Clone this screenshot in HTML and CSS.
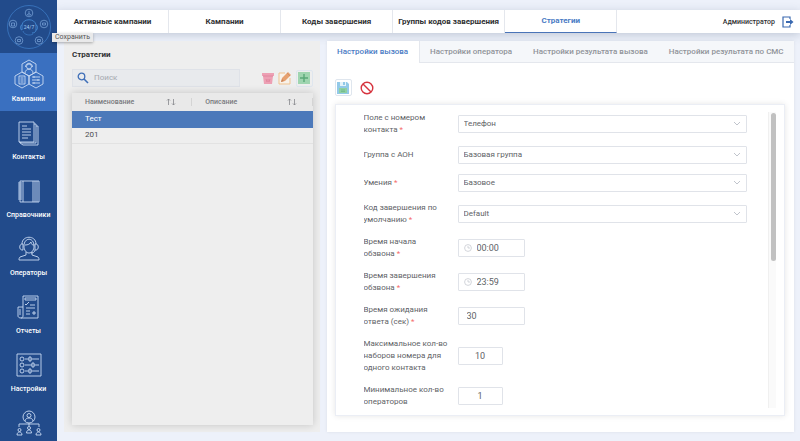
FILE: index.html
```html
<!DOCTYPE html>
<html lang="ru">
<head>
<title>Стратегии</title>
<meta charset="UTF-8">
<meta name="viewport" content="width=device-width, initial-scale=1.0">
<link rel="stylesheet" href="styles.css">
</head>
<body>
  <aside class="sidebar">
    <a class="logo" href="#" aria-label="24/7">
      <svg viewBox="0 0 48 48" width="48" height="48">
        <g fill="none" stroke="#7fa9dc" stroke-width="0.7">
          <circle cx="24" cy="24" r="21.500" stroke="#3f80cc"/>
          <circle cx="24" cy="10" r="3.800"/>
          <circle cx="8" cy="21" r="3.800"/>
          <circle cx="39" cy="21" r="3.800"/>
          <circle cx="14" cy="37.500" r="3.800"/>
          <circle cx="34" cy="37.500" r="3.800"/>
          <path d="M17 22c1-7 13-7 14 0M17 22c-2 0-2 5 0 5zM31 22c2 0 2 5 0 5zM31 27c0 2-2 3-4 3" stroke="#4f9be6"/>
          <path d="M18 28c1 4 7 5 10 3" stroke="#3f80cc"/>
          <path d="M24 8v2M22.500 12c0-2 3-2 3 0zM6.500 20h3v3h-3zM37.500 20h3v2h-3zM12.500 36.500h3v2h-3zM32.500 36.500h3v2h-3z"/>
        </g>
        <text x="24" y="26" text-anchor="middle" class="logo-text">24/7</text>
      </svg>
    </a>
    <nav class="menu">
      <a class="menu-item active" href="#">
        <svg viewBox="0 0 30 30" width="30" height="30">
          <path d="M15 1l7 4v8l-7 4-7-4V5zM8 13l7 4v8l-7 4-7-4v-8zM22 13l7 4v8l-7 4-7-4v-8z"/>
          <circle cx="15" cy="7.500" r="2.500"/>
          <path d="M11 14c0-5 8-5 8 0M11.500 8c0-5 7-5 7 0M5 17h6v8H5zM6.500 19h3M6.500 21h3M6.500 23h3M18 18h8M18 21h8M18 24h8M20 17v2M24 20v2M20 23v2"/>
        </svg>
        <span>Кампании</span>
      </a>
      <a class="menu-item" href="#">
        <svg viewBox="0 0 24 26" width="24" height="26">
          <path d="M2 2h15v20H2zM17 4h2v19H5l-3-1M19 6h2v19H6l-3-2M5 6h5M5 9h9M5 12h9M5 15h9M5 18h6"/>
        </svg>
        <span>Контакты</span>
      </a>
      <a class="menu-item" href="#">
        <svg viewBox="0 0 24 26" width="24" height="26">
          <path d="M3 3h19v21H3zM6 3v21M16 3v21M18 3v21M20 3v21M1 5h4M1 7h4M1 9h4M1 11h4M1 13h4M1 15h4M1 17h4M1 19h4M1 21h4"/>
        </svg>
        <span>Справочники</span>
      </a>
      <a class="menu-item" href="#">
        <svg viewBox="0 0 24 26" width="24" height="26">
          <path d="M7 10c0-9 10-9 10 0 0 4-2 7-5 7s-5-3-5-7zM8 9c3 0 5-1 6-3 0 2 1 3 3 3M5 8c0-9 14-9 14 0M5 8c-3 0-3 6 0 6h1V8zM19 8c3 0 3 6 0 6h-1V8zM18 14c0 2-2 3-4 3M9 16v3l-6 2c-1 1-1 2-1 3h20c0-1 0-2-1-3l-6-2v-3"/>
        </svg>
        <span>Операторы</span>
      </a>
      <a class="menu-item" href="#">
        <svg viewBox="0 0 24 26" width="24" height="26">
          <path d="M6 2h15v22H4c-2 0-3-1-3-2v-9h5zM6 13v9c0 1-1 2-2 2M8 4h11v2H8zM8 10l1 1 3-3M13 11h5M9 14h9M9 17h4M9 20h4M3 15v6M16 18h2v2h-2z"/>
        </svg>
        <span>Отчеты</span>
      </a>
      <a class="menu-item" href="#">
        <svg viewBox="0 0 26 26" width="26" height="26">
          <path d="M1 2h24v22H1zM9 7h4M15 7h8M9 13h7M18 13h5M9 19h4M15 19h8M13 5h2v4h-2zM16 11h2v4h-2zM13 17h2v4h-2z"/>
          <circle cx="6" cy="7" r="2"/>
          <circle cx="6" cy="13" r="2"/>
          <circle cx="6" cy="19" r="2"/>
        </svg>
        <span>Настройки</span>
      </a>
      <a class="menu-item" href="#" aria-label="Группы">
        <svg viewBox="0 0 26 26" width="26" height="26">
          <circle cx="13" cy="7" r="6"/>
          <circle cx="13" cy="5.500" r="2"/>
          <circle cx="3.500" cy="20" r="1.500"/>
          <circle cx="13" cy="18" r="1.500"/>
          <circle cx="22.500" cy="20" r="1.500"/>
          <path d="M9 11c0-4 8-4 8 0M3 17v-3h20v3M13 13v3M1 25c0-4 5-4 5 0zM10.500 23c0-4 5-4 5 0zM20 25c0-4 5-4 5 0z"/>
        </svg>
      </a>
    </nav>
    <div class="tooltip">Сохранить</div>
  </aside>

  <div class="page">
    <header class="header">
      <nav class="top-nav">
        <a href="#">Активные кампании</a>
        <a href="#">Кампании</a>
        <a href="#">Коды завершения</a>
        <a href="#">Группы кодов завершения</a>
        <a class="active" href="#">Стратегии</a>
      </nav>
      <div class="user">
        <span>Администратор</span>
        <button class="icon-btn" type="button" aria-label="Выход">
          <svg viewBox="0 0 12 12" width="12" height="12">
            <path d="M8 3V1H1v10h7V9" fill="none" stroke="#3a69b0" stroke-width="1.200"/>
            <path d="M4 5h4V3l3.500 3L8 9V7H4z" fill="#3a69b0"/>
          </svg>
        </button>
      </div>
    </header>

    <main class="content">
      <section class="list-panel">
        <h1>Стратегии</h1>
        <div class="toolbar">
          <label class="search">
            <svg viewBox="0 0 12 12" width="12" height="12">
              <circle cx="4.500" cy="4.500" r="3.300" fill="none" stroke="#3f6fb8" stroke-width="1.300"/>
              <path d="M7 7l4 4" stroke="#3f6fb8" stroke-width="1.600"/>
            </svg>
            <input type="text" placeholder="Поиск" aria-label="Поиск">
          </label>
          <div class="actions">
            <button class="icon-btn" type="button" aria-label="Удалить">
              <svg viewBox="0 0 12 14" width="12" height="14">
                <path d="M0 2h12v3H0zM1 5h10l-1 8H2z" fill="#eda0b4"/>
                <path d="M1 5h10M4 8l1 3M6 8v3M8 8l-1 3" fill="none" stroke="#dd8299" stroke-width="0.800"/>
              </svg>
            </button>
            <button class="icon-btn" type="button" aria-label="Изменить">
              <svg viewBox="0 0 14 14" width="14" height="14">
                <path d="M7 2H1v11h11V7" fill="#f8f2ea" stroke="#efc391"/>
                <path d="M3 11l1-4 6-6 3 3-6 6z" fill="#e6a170"/>
                <path d="M9 2l3 3" stroke="#c9855a" stroke-width="0.600"/>
                <path d="M3 11l1-3 2 2z" fill="#c9855a"/>
              </svg>
            </button>
            <button class="icon-btn framed" type="button" aria-label="Добавить">
              <svg viewBox="0 0 12 12" width="12" height="12">
                <path d="M0 0h12v12H0z" fill="#9fd5b0"/>
                <path d="M6 2v8M2 6h8" stroke="#59a878" stroke-width="1.400"/>
              </svg>
            </button>
          </div>
        </div>
        <div class="table-box">
          <table>
            <thead>
              <tr>
                <th><div class="th"><span>Наименование</span><svg viewBox="0 0 10 8" width="10" height="8"><path d="M2.500 7V1M1 2.500L2.500 1 4 2.500M7.500 1v6M6 5.500L7.500 7 9 5.500"/></svg></div></th>
                <th><div class="th"><span>Описание</span><svg viewBox="0 0 10 8" width="10" height="8"><path d="M2.500 7V1M1 2.500L2.500 1 4 2.500M7.500 1v6M6 5.500L7.500 7 9 5.500"/></svg></div></th>
              </tr>
            </thead>
            <tbody>
              <tr class="selected"><td>Тест</td><td></td></tr>
              <tr><td>201</td><td></td></tr>
            </tbody>
          </table>
        </div>
      </section>

      <section class="settings-panel">
        <div class="tabs">
          <button class="tab active" type="button">Настройки вызова</button>
          <button class="tab" type="button">Настройки оператора</button>
          <button class="tab" type="button">Настройки результата вызова</button>
          <button class="tab" type="button">Настройки результата по СМС</button>
        </div>
        <div class="form-actions">
          <button class="icon-btn framed" type="button" aria-label="Сохранить">
            <svg viewBox="0 0 14 14" width="14" height="14">
              <path d="M1 1h10l2 2v10H1z" fill="#92c9e8"/>
              <path d="M4 1h6v4H4z" fill="#e4f3fa"/>
              <path d="M7 1h2v3H7z" fill="#92c9e8"/>
              <path d="M3 7h8v5H3z" fill="#8fd0a2"/>
              <path d="M5 9h4M5 10.500h4" stroke="#69b487" stroke-width="0.700"/>
            </svg>
          </button>
          <button class="icon-btn" type="button" aria-label="Отмена">
            <svg viewBox="0 0 14 14" width="14" height="14">
              <circle cx="7" cy="7" r="5.800" fill="none" stroke="#d6343f" stroke-width="1.400"/>
              <path d="M3 3l8 8" stroke="#d6343f" stroke-width="1.400"/>
            </svg>
          </button>
        </div>
        <div class="card">
          <form class="form">
            <div class="form-group">
              <label class="required" for="phone_field">Поле с номером контакта</label>
              <div class="select">
                <select id="phone_field"><option>Телефон</option></select>
                <svg viewBox="0 0 8 6" width="8" height="6"><path d="M1 1l3 3 3-3"/></svg>
              </div>
            </div>
            <div class="form-group">
              <label for="aon_group">Группа с АОН</label>
              <div class="select">
                <select id="aon_group"><option>Базовая группа</option></select>
                <svg viewBox="0 0 8 6" width="8" height="6"><path d="M1 1l3 3 3-3"/></svg>
              </div>
            </div>
            <div class="form-group">
              <label class="required" for="skills">Умения</label>
              <div class="select">
                <select id="skills"><option>Базовое</option></select>
                <svg viewBox="0 0 8 6" width="8" height="6"><path d="M1 1l3 3 3-3"/></svg>
              </div>
            </div>
            <div class="form-group">
              <label class="required" for="end_code">Код завершения по умолчанию</label>
              <div class="select">
                <select id="end_code"><option>Default</option></select>
                <svg viewBox="0 0 8 6" width="8" height="6"><path d="M1 1l3 3 3-3"/></svg>
              </div>
            </div>
            <div class="form-group">
              <label class="required" for="time_start">Время начала обзвона</label>
              <div class="time">
                <svg viewBox="0 0 8 8" width="8" height="8"><circle cx="4" cy="4" r="3.400"/><path d="M4 2v2h2"/></svg>
                <input type="text" id="time_start" value="00:00">
              </div>
            </div>
            <div class="form-group">
              <label class="required" for="time_end">Время завершения обзвона</label>
              <div class="time">
                <svg viewBox="0 0 8 8" width="8" height="8"><circle cx="4" cy="4" r="3.400"/><path d="M4 2v2h2"/></svg>
                <input type="text" id="time_end" value="23:59">
              </div>
            </div>
            <div class="form-group">
              <label class="required" for="wait_time">Время ожидания ответа (сек)</label>
              <input class="field" type="text" id="wait_time" value="30">
            </div>
            <div class="form-group">
              <label for="max_calls">Максимальное кол-во наборов номера для одного контакта</label>
              <input class="field short" type="text" id="max_calls" value="10">
            </div>
            <div class="form-group">
              <label for="min_operators">Минимальное кол-во операторов</label>
              <input class="field short" type="text" id="min_operators" value="1">
            </div>
          </form>
          <div class="scroll-track"><div class="scroll-thumb"></div></div>
        </div>
      </section>
    </main>
  </div>
</body>
</html>
```
FILE: styles.css
```css
* {
  box-sizing: border-box;
}

body {
  margin: 0;
  height: 100vh;
  display: flex;
  overflow: hidden;
  background-color: #edf1fa;
  font-family: Roboto, "Liberation Sans", sans-serif;
  font-size: 8px;
  line-height: 12px;
  color: #606266;
}

a {
  color: inherit;
  text-decoration: none;
}

button, input, select {
  font: inherit;
  color: inherit;
  margin: 0;
}

svg {
  display: block;
  flex: none;
}

/* Sidebar */
.sidebar {
  position: relative;
  flex: none;
  width: 57px;
  background-color: #224b8b;
}

.logo {
  display: flex;
  justify-content: center;
  align-items: center;
  height: 53px;
}

.logo-text {
  font-size: 5px;
  fill: #a9cdf5;
}

.menu {
  height: calc(100vh - 53px);
  overflow: hidden;
}

.menu-item {
  display: flex;
  flex-direction: column;
  align-items: center;
  justify-content: space-between;
  height: 58px;
  padding: 9px 0 6px;
  color: #fff;
  font-size: 7px;
  font-weight: 500;
}

.menu-item svg {
  fill: none;
  stroke: #c9daf3;
  stroke-width: 0.9;
}

.menu-item.active {
  padding-top: 6px;
  background-color: #3a70c0;
}

.tooltip {
  position: absolute;
  left: 52px;
  top: 33px;
  z-index: 2;
  padding: 0 3px;
  background-color: #e9e9ea;
  box-shadow: 0 1px 3px rgba(0, 0, 0, 0.3);
  color: #555;
  font-size: 7px;
  line-height: 9px;
}

/* Header */
.page {
  flex: 1;
  min-width: 0;
  display: flex;
  flex-direction: column;
  padding-top: 10px;
}

.header {
  display: flex;
  justify-content: space-between;
  height: 23px;
  background-color: #fff;
  box-shadow: 0 2px 10px rgba(60, 80, 110, 0.25);
  color: #303133;
  font-weight: 500;
}

.top-nav {
  width: 75.4%;
  display: flex;
}

.top-nav a {
  flex: 1;
  display: flex;
  align-items: center;
  justify-content: center;
  border-right: 1px solid #e4e7ed;
  font-weight: 700;
  white-space: nowrap;
}

.top-nav a.active {
  color: #4a7bc4;
  border-bottom: 1px solid #4a74b8;
}

.user {
  display: flex;
  align-items: center;
  gap: 7px;
  padding-right: 6px;
  font-size: 7px;
}

.icon-btn {
  display: flex;
  align-items: center;
  justify-content: center;
  padding: 0;
  border: none;
  background: none;
  cursor: pointer;
}

.icon-btn.framed {
  width: 17px;
  height: 17px;
  border: 1px solid #dfe6ee;
  border-radius: 2px;
}

/* Content */
.content {
  flex: 1;
  min-height: 0;
  display: flex;
  gap: 7px;
  padding: 8px 6px 9px 7px;
}

.list-panel {
  flex: none;
  width: 35%;
  display: flex;
  flex-direction: column;
  padding: 8px 7px 7px 8px;
  background-color: #eee;
}

.list-panel h1 {
  margin: 0 0 8px;
  font-size: 8px;
  line-height: 12px;
  color: #303133;
}

.toolbar {
  display: flex;
  align-items: center;
  justify-content: space-between;
  margin-bottom: 6px;
}

.search {
  flex: none;
  display: flex;
  align-items: center;
  gap: 5px;
  width: 70%;
  height: 18px;
  padding: 0 4px;
  border: 1px solid #dfe2e8;
  background-color: #e8eaed;
}

.search input {
  flex: 1;
  min-width: 0;
  padding: 0;
  border: none;
  outline: none;
  background: none;
}

.search input::placeholder {
  color: #a6a9b0;
}

.actions {
  display: flex;
  align-items: center;
  gap: 4px;
}

.table-box {
  flex: 1;
  background-color: #eee;
  box-shadow: 0 0 8px rgba(0, 0, 0, 0.18);
}

table {
  width: 100%;
  border-collapse: collapse;
  table-layout: fixed;
}

th, td {
  padding: 0 0 0 13px;
  text-align: left;
}

th {
  height: 18px;
  background-color: #e9e9e9;
  color: #77797d;
  font-size: 7px;
  font-weight: 500;
}

.th {
  display: flex;
  justify-content: space-between;
  align-items: center;
  padding-right: 15px;
  border-right: 1px solid #d4d4d4;
  line-height: 8px;
}

.th svg {
  fill: none;
  stroke: #85878b;
  stroke-width: 0.8;
}

td {
  height: 16px;
  border-bottom: 1px solid #e2e2e2;
  color: #4a4c50;
}

.selected td {
  background-color: #4c79ba;
  border-color: #4c79ba;
  color: #fff;
}

/* Settings */
.settings-panel {
  flex: 1;
  min-width: 0;
  display: flex;
  flex-direction: column;
  background-color: #fff;
  box-shadow: 0 0 3px rgba(0, 0, 0, 0.08);
}

.tabs {
  display: flex;
  height: 22px;
  background-color: #f5f7fa;
}

.tab {
  flex: auto;
  padding: 0 10px;
  border: none;
  border-bottom: 1px solid #e4e7ed;
  background: none;
  color: #909399;
  font-weight: 500;
  white-space: nowrap;
  cursor: pointer;
}

.tab.active {
  border-right: 1px solid #e4e7ed;
  border-bottom: none;
  background-color: #fff;
  color: #4a7bc4;
}

.form-actions {
  display: flex;
  gap: 8px;
  align-items: center;
  padding: 16px 8px 8px;
}

.card {
  flex: 1;
  min-height: 0;
  display: flex;
  margin: 0 9px 16px 8px;
  padding: 7px 8px 7px 28px;
  border: 1px solid #ebeef5;
  box-shadow: 0 0 6px rgba(0, 0, 0, 0.1);
}

.form {
  flex: 1;
  display: flex;
  flex-direction: column;
  gap: 10px;
  padding-right: 21px;
  overflow: hidden;
}

.form-group {
  flex: none;
  display: flex;
  align-items: center;
}

.form-group label {
  flex: none;
  width: 94px;
  padding-right: 8px;
}

.form-group .required::after {
  content: "\a0*";
  color: #f56c6c;
}

.select {
  position: relative;
  flex: 1;
}

.select select {
  display: block;
  width: 100%;
  height: 18px;
  padding: 0 5px;
  appearance: none;
  border: 1px solid #e0e3e9;
  border-radius: 1px;
  background-color: #fff;
}

.select svg {
  position: absolute;
  right: 6px;
  top: 6px;
  fill: none;
  stroke: #c0c4cc;
  pointer-events: none;
}

.time, .field {
  width: 67px;
  height: 18px;
  border: 1px solid #e0e3e9;
  border-radius: 1px;
  font-size: 9px;
}

.time {
  display: flex;
  align-items: center;
  gap: 5px;
  padding-left: 5px;
}

.time svg {
  fill: none;
  stroke: #c0c4cc;
  stroke-width: 0.7;
}

.time input {
  flex: 1;
  min-width: 0;
  padding: 0;
  border: none;
  outline: none;
}

.field {
  padding: 0 8px;
}

.field.short {
  width: 45px;
  text-align: center;
}

.scroll-track {
  width: 8px;
  padding: 1px 1px 0 2px;
  background-color: #fafafa;
  border-left: 1px solid #f0f0f0;
}

.scroll-thumb {
  width: 5px;
  height: 50%;
  border-radius: 3px;
  background-color: #c1c1c1;
}
```
